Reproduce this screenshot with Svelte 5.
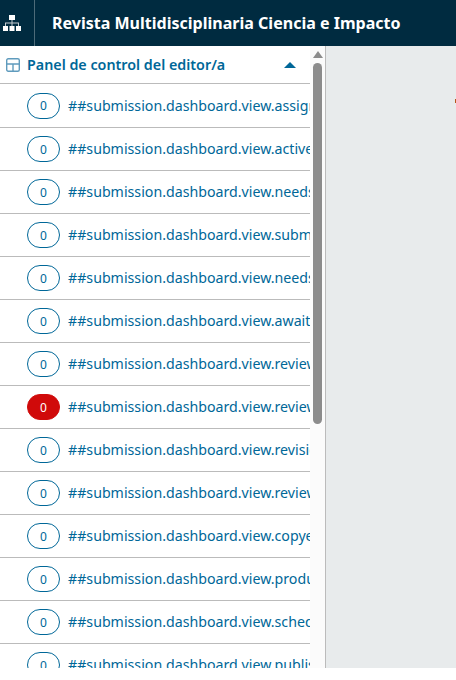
<script>
  const views = [
    "assigned", "active", "needsReview", "submission", "needsEditor", "awaitingReviews",
    "reviewsSubmitted", "reviewsOverdue", "revisionsRequested", "reviewsDone",
    "copyediting", "production", "scheduled", "published"
  ];
  const overdue = "reviewsOverdue";
</script>

<div class="page">
  <header class="topbar">
    <button class="sitemap" aria-label="Sitemap">
      <svg width="18" height="16" viewBox="0 0 18 16" fill="#fff">
        <rect x="6" y="0" width="6" height="5" />
        <rect x="0" y="11" width="5" height="5" />
        <rect x="6.5" y="11" width="5" height="5" />
        <rect x="13" y="11" width="5" height="5" />
        <g fill="#c4ccd0">
          <rect x="8.5" y="5" width="1" height="3" />
          <rect x="2" y="7.5" width="14" height="1" />
          <rect x="2" y="8" width="1" height="3" />
          <rect x="8.5" y="8" width="1" height="3" />
          <rect x="15" y="8" width="1" height="3" />
        </g>
      </svg>
    </button>
    <h1>Revista Multidisciplinaria Ciencia e Impacto</h1>
  </header>

  <div class="body">
    <nav class="sidebar">
      <div class="list">
        <div class="section">
          <svg class="panel-icon" width="14" height="14" viewBox="0 0 14 14" fill="none" stroke="#5f9bbd" stroke-width="1.4">
            <rect x="0.7" y="0.7" width="12.6" height="12.6" rx="1.5" />
            <path d="M0.7 6H13.3M7 6V13.3" />
          </svg>
          <span class="section-title">Panel de control del editor/a</span>
          <span class="caret"></span>
        </div>
        {#each views as view}
          <a class="row" href="#{view}">
            <span class="count" class:alert={view === overdue}>0</span>
            <span class="label">##submission.dashboard.view.{view}</span>
          </a>
        {/each}
      </div>
      <div class="scroll-arrow"></div>
      <div class="scroll-thumb"></div>
    </nav>
    <main class="content">
      <span class="mark"></span>
    </main>
  </div>
</div>

<style>
  :global(body) {
    margin: 0;
    background: #fff;
  }

  .page {
    width: 456px;
    height: 668px;
    display: flex;
    flex-direction: column;
    overflow: hidden;
    font-family: "Noto Sans", sans-serif;
  }

  .topbar {
    height: 46px;
    flex: none;
    display: flex;
    align-items: center;
    background: #002b40;
    color: #fff;
  }

  .sitemap {
    width: 35px;
    height: 46px;
    flex: none;
    display: flex;
    align-items: center;
    padding: 0 0 0 3px;
    background: none;
    border: 0;
    border-right: 1px solid #4d6b79;
    box-sizing: border-box;
  }

  h1 {
    margin: 0 0 0 17px;
    font-size: 16.05px;
    font-weight: 700;
    white-space: nowrap;
  }

  .body {
    flex: 1;
    display: flex;
    min-height: 0;
  }

  .sidebar {
    position: relative;
    width: 325px;
    flex: none;
    background: #fbfbfb;
    border-right: 1px solid #bbb;
    overflow: hidden;
  }

  .list {
    width: 310px;
    background: #fff;
    overflow: hidden;
    height: 100%;
  }

  .section {
    height: 37px;
    display: flex;
    align-items: center;
    padding: 0 14px 0 6px;
    border-bottom: 1px solid #bbb;
  }

  .section-title {
    margin-left: 7px;
    font-size: 14.3px;
    font-weight: 600;
    color: #006798;
    white-space: nowrap;
  }

  .caret {
    margin-left: auto;
    width: 0;
    height: 0;
    border-left: 6px solid transparent;
    border-right: 6px solid transparent;
    border-bottom: 6px solid #006798;
  }

  .row {
    height: 42px;
    display: flex;
    align-items: center;
    padding-left: 27px;
    border-bottom: 1px solid #bbb;
    color: #006798;
    text-decoration: none;
    white-space: nowrap;
    overflow: hidden;
  }

  .section + .row {
    height: 43px;
  }

  .count {
    width: 31px;
    height: 24px;
    flex: none;
    display: flex;
    align-items: center;
    justify-content: center;
    border: 1px solid #006798;
    border-radius: 13px;
    background: #fff;
    color: #006798;
    font-size: 12px;
  }

  .count.alert {
    background: #d00a0a;
    border-color: #d00a0a;
    color: #fff;
  }

  .label {
    margin-left: 8px;
    padding-bottom: 2px;
    font-size: 14.2px;
  }

  .section + .row .label {
    padding-bottom: 0;
  }

  .scroll-arrow {
    position: absolute;
    left: 313px;
    top: 5px;
    width: 0;
    height: 0;
    border-left: 5px solid transparent;
    border-right: 5px solid transparent;
    border-bottom: 7px solid #8c8c8c;
  }

  .scroll-thumb {
    position: absolute;
    left: 313px;
    top: 17px;
    width: 9px;
    height: 361px;
    border-radius: 5px;
    background: #8c8c8c;
  }

  .content {
    flex: 1;
    position: relative;
    background: #e8ebec;
  }

  .mark {
    position: absolute;
    right: 0;
    top: 53px;
    width: 1px;
    height: 4px;
    background: #b5561c;
  }
</style>
